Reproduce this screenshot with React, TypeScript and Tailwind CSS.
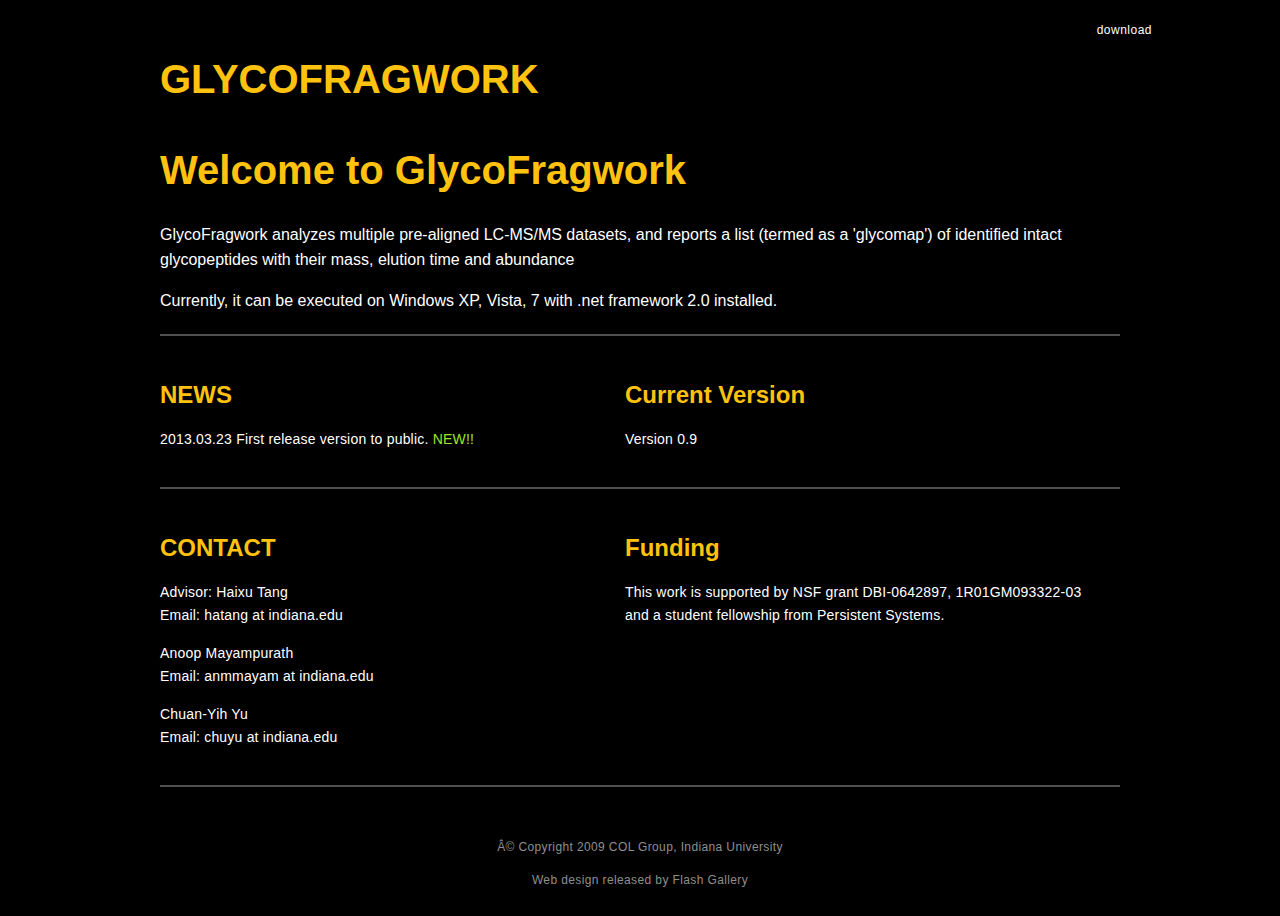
export default function App() {
  const font = { fontFamily: '"Liberation Sans", Arial, sans-serif' }
  return (
    <div className="min-h-[916px] bg-black text-white" style={font}>
      <div className="mx-auto flex w-[1024px] justify-end pt-[21px]">
        <a href="#" className="text-[12px] leading-[18px] tracking-[0.5px] text-white">
          download
        </a>
      </div>

      <div className="mx-auto w-[960px]">
        <h1 className="mt-[16px] text-[40px] font-bold leading-[48px] text-[#fec20f]">GLYCOFRAGWORK</h1>

        <h1 className="mt-[43px] text-[40px] font-bold leading-[48px] text-[#fec20f]">
          Welcome to GlycoFragwork
        </h1>
        <p className="mt-[28px] text-[16px] leading-[25px]">
          GlycoFragwork analyzes multiple pre-aligned LC-MS/MS datasets, and reports a list (termed as a 'glycomap') of
          identified intact glycopeptides with their mass, elution time and abundance
        </p>
        <p className="mt-[16px] text-[16px] leading-[25px]">
          Currently, it can be executed on Windows XP, Vista, 7 with .net framework 2.0 installed.
        </p>
        <div className="mt-[21px] h-[2px] bg-[#4f4f4f]" />

        <div className="grid grid-cols-[465px_465px] pt-[44px] pb-[36px] text-[14px] leading-[23px] tracking-[0.2px]">
          <div>
            <h2 className="text-[24px] font-bold leading-[30px] tracking-normal text-[#fec20f]">NEWS</h2>
            <p className="mt-[18px]">
              2013.03.23 First release version to public. <span className="text-[#9be528]">NEW!!</span>
            </p>
          </div>
          <div>
            <h2 className="text-[24px] font-bold leading-[30px] tracking-normal text-[#fec20f]">Current Version</h2>
            <p className="mt-[18px]">Version 0.9</p>
          </div>
        </div>
        <div className="h-[2px] bg-[#4f4f4f]" />

        <div className="grid grid-cols-[465px_465px] pt-[44px] pb-[36px] text-[14px] leading-[23px] tracking-[0.2px]">
          <div>
            <h2 className="text-[24px] font-bold leading-[30px] tracking-normal text-[#fec20f]">CONTACT</h2>
            <p className="mt-[18px]">
              Advisor: Haixu Tang
              <br />
              Email: hatang at indiana.edu
            </p>
            <p className="mt-[15px]">
              Anoop Mayampurath
              <br />
              Email: anmmayam at indiana.edu
            </p>
            <p className="mt-[15px]">
              Chuan-Yih Yu
              <br />
              Email: chuyu at indiana.edu
            </p>
          </div>
          <div>
            <h2 className="text-[24px] font-bold leading-[30px] tracking-normal text-[#fec20f]">Funding</h2>
            <p className="mt-[18px]">
              This work is supported by NSF grant DBI-0642897, 1R01GM093322-03 and a student fellowship from Persistent
              Systems.
            </p>
          </div>
        </div>
        <div className="h-[2px] bg-[#4f4f4f]" />

        <div className="pt-[51px] pb-[25px] text-center text-[12px] leading-[18px] tracking-[0.38px] text-[#8f8f8f]">
          <p>Â© Copyright 2009 COL Group, Indiana University</p>
          <p className="mt-[15px]">Web design released by Flash Gallery</p>
        </div>
      </div>
    </div>
  )
}
